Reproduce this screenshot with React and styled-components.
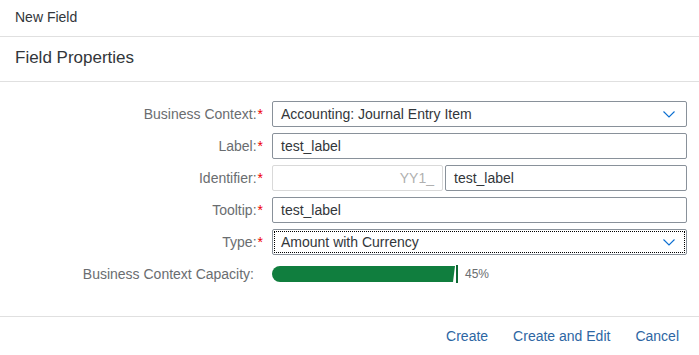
import styled, { createGlobalStyle } from "styled-components";

const GlobalStyle = createGlobalStyle`
    body {
        margin: 0;
        background: #fff;
        font-family: "Liberation Sans", Arial, sans-serif;
        color: #32363a;
    }
`;

const Page = styled.div`
    width: 699px;
    height: 355px;
    display: flex;
    flex-direction: column;
    background: #fff;
`;

const TopBar = styled.header`
    height: 37px;
    flex: none;
    box-sizing: border-box;
    border-bottom: 1px solid #e0e0e0;
    display: flex;
    align-items: center;
    padding: 0 15px 2px;
    font-size: 14px;
    color: #32363a;
`;

const SectionTitle = styled.h2`
    margin: 0;
    flex: none;
    height: 45px;
    box-sizing: border-box;
    border-bottom: 1px solid #e0e0e0;
    display: flex;
    align-items: center;
    padding: 0 15px 2px;
    font-size: 17px;
    font-weight: normal;
    color: #32363a;
`;

const Form = styled.div`
    flex: 1;
    display: grid;
    grid-template-columns: 263px 1fr;
    grid-auto-rows: 26px;
    align-content: start;
    column-gap: 9px;
    row-gap: 6px;
    padding: 19px 12px 0 0;
    border-bottom: 1px solid #e0e0e0;
`;

const Label = styled.div`
    display: flex;
    align-items: center;
    justify-content: flex-end;
    font-size: 14px;
    color: #6a6d70;
    white-space: nowrap;
    &::after {
        content: "${p => (p.$required ? "*" : "")}";
        color: #e00;
        margin-left: 1px;
        margin-right: ${p => (p.$required ? "0" : "8px")};
    }
`;

const Box = styled.div`
    box-sizing: border-box;
    height: 26px;
    border: 1px solid ${p => (p.$disabled ? "#d9d9d9" : "#89919a")};
    border-radius: 2px;
    background: #fff;
    display: flex;
    align-items: center;
    padding: 0 8px;
    font-size: 14px;
    color: ${p => (p.$disabled ? "#b0b0b0" : "#32363a")};
    justify-content: ${p => (p.$end ? "flex-end" : "space-between")};
    position: relative;
    ${p => p.$focus && `
        &::before {
            content: "";
            position: absolute;
            inset: 1px;
            border: 1px dotted #000;
        }
    `}
`;

const Split = styled.div`
    display: grid;
    grid-template-columns: 171px 1fr;
    column-gap: 2px;
`;

const Chevron = () => (
    <svg width="12" height="7" viewBox="0 0 12 7" style={{ marginRight: 3 }}>
        <path d="M0.5 0.5 L6 6 L11.5 0.5" fill="none" stroke="#0a6ed1" strokeWidth="1.1" />
    </svg>
);

const CapacityRow = styled.div`
    display: flex;
    align-items: center;
    gap: 7px;
`;

const Track = styled.div`
    display: flex;
    align-items: center;
    width: 186px;
    height: 16px;
`;

const Fill = styled.div`
    height: 16px;
    background: #107e3e;
    border-radius: 8px 0 0 8px;
    clip-path: polygon(0 0, 100% 0, calc(100% - 2px) 100%, 0 100%);
`;

const Tick = styled.div`
    width: 2px;
    height: 18px;
    margin-left: 1px;
    background: #0d6733;
`;

const Percent = styled.span`
    font-size: 12px;
    color: #6a6d70;
`;

const Footer = styled.footer`
    height: 38px;
    flex: none;
    display: flex;
    align-items: center;
    justify-content: flex-end;
    gap: 25px;
    padding: 0 20px 0 0;
`;

const Action = styled.button`
    border: none;
    background: none;
    padding: 0;
    font: inherit;
    font-size: 14px;
    color: #2d66a3;
    cursor: pointer;
`;

const App = () => {
    const capacity = 45;
    return (
        <Page>
            <GlobalStyle />
            <TopBar>New Field</TopBar>
            <SectionTitle>Field Properties</SectionTitle>
            <Form>
                <Label $required>Business Context:</Label>
                <Box>
                    Accounting: Journal Entry Item
                    <Chevron />
                </Box>

                <Label $required>Label:</Label>
                <Box>test_label</Box>

                <Label $required>Identifier:</Label>
                <Split>
                    <Box $disabled $end>YY1_</Box>
                    <Box>test_label</Box>
                </Split>

                <Label $required>Tooltip:</Label>
                <Box>test_label</Box>

                <Label $required>Type:</Label>
                <Box $focus>
                    Amount with Currency
                    <Chevron />
                </Box>

                <Label>Business Context Capacity:</Label>
                <CapacityRow>
                    <Track>
                        <Fill style={{ width: `${capacity * 4.07}px` }} />
                        <Tick />
                    </Track>
                    <Percent>{capacity}%</Percent>
                </CapacityRow>
            </Form>
            <Footer>
                <Action>Create</Action>
                <Action>Create and Edit</Action>
                <Action>Cancel</Action>
            </Footer>
        </Page>
    );
};

export default App;
